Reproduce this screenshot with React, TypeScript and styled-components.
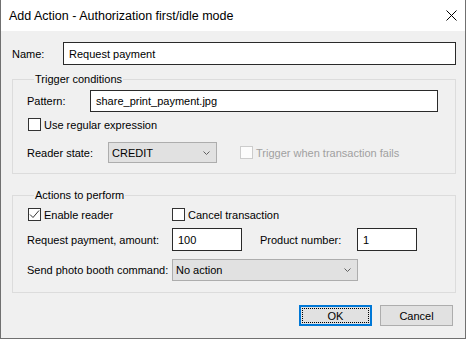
import React from "react";
import styled, { createGlobalStyle } from "styled-components";

const Global = createGlobalStyle`
  html, body { margin: 0; padding: 0; background: #ffffff; }
  body { font-family: "Liberation Sans", Arial, sans-serif; font-size: 11px; color: #000; }
  * { box-sizing: border-box; }
`;

const Window = styled.div`
  width: 466px;
  height: 339px;
  border: 1px solid #707070;
  border-top: none;
  background: #f0f0f0;
  display: flex;
  flex-direction: column;
`;

const TitleBar = styled.div`
  height: 31px;
  background: #ffffff;
  display: flex;
  align-items: center;
  justify-content: space-between;
  padding: 0 0 0 8px;
  font-size: 12.5px;
  flex-shrink: 0;
`;

const CloseBtn = styled.div`
  width: 28px;
  height: 30px;
  display: flex;
  align-items: center;
  justify-content: center;
`;

const Content = styled.div`
  padding: 11px 9px 0 11px;
  display: flex;
  flex-direction: column;
`;

const Row = styled.div<{ $mt?: number; $h?: number }>`
  display: flex;
  align-items: center;
  margin-top: ${(p) => p.$mt ?? 0}px;
  height: ${(p) => p.$h ?? 23}px;
`;

const Label = styled.span<{ $w: number; $ml?: number }>`
  width: ${(p) => p.$w}px;
  margin-left: ${(p) => p.$ml ?? 0}px;
  flex-shrink: 0;
  white-space: nowrap;
`;

const TextBox = styled.div<{ $w?: number; $h?: number }>`
  ${(p) => (p.$w ? `width: ${p.$w}px;` : "flex: 1;")}
  height: ${(p) => p.$h ?? 23}px;
  border: 1px solid #2a2a2a;
  background: #ffffff;
  display: flex;
  align-items: center;
  padding-left: 5px;
  white-space: nowrap;
`;

const Combo = styled.div<{ $w: number; $h?: number }>`
  width: ${(p) => p.$w}px;
  height: ${(p) => p.$h ?? 21}px;
  border: 1px solid #adadad;
  background: #e1e1e1;
  display: flex;
  align-items: center;
  justify-content: space-between;
  padding: 0 6px 0 3px;
`;

const Group = styled.fieldset<{ $mt: number; $pt: number; $pb: number }>`
  margin: ${(p) => p.$mt}px 0 0 0;
  border: 1px solid #dcdcdc;
  padding: ${(p) => p.$pt}px 17px ${(p) => p.$pb}px 14px;
  min-width: 0;
  display: flex;
  flex-direction: column;
`;

const Legend = styled.legend`
  margin-left: 7px;
  padding: 0 1px;
  line-height: 15px;
`;

const CheckItem = styled.label<{ $w?: number; $ml?: number; $disabled?: boolean }>`
  display: flex;
  align-items: center;
  gap: 3px;
  margin-left: ${(p) => p.$ml ?? 0}px;
  ${(p) => (p.$w ? `width: ${p.$w}px;` : "")}
  color: ${(p) => (p.$disabled ? "#a0a0a0" : "#000")};
  white-space: nowrap;
  flex-shrink: 0;
`;

const Box = styled.span<{ $disabled?: boolean }>`
  width: 13px;
  height: 13px;
  border: 1px solid ${(p) => (p.$disabled ? "#cccccc" : "#333333")};
  background: ${(p) => (p.$disabled ? "#fcfcfc" : "#ffffff")};
  display: flex;
  align-items: center;
  justify-content: center;
  flex-shrink: 0;
`;

const ButtonRow = styled.div`
  display: flex;
  justify-content: flex-end;
  gap: 8px;
  margin-top: 12px;
  padding-right: 3px;
`;

const Button = styled.div<{ $default?: boolean }>`
  width: 73px;
  height: 21px;
  background: #e1e1e1;
  border: ${(p) => (p.$default ? "2px solid #0078d7" : "1px solid #adadad")};
  display: flex;
  align-items: center;
  justify-content: center;
  position: relative;
`;

const FocusRect = styled.span`
  position: absolute;
  inset: 1px;
  border: 1px dotted #000;
`;

const Chevron = () => (
  <svg width="7" height="4" viewBox="0 0 7 4">
    <path d="M0.5 0.5 L3.5 3.5 L6.5 0.5" fill="none" stroke="#606060" strokeWidth="1" />
  </svg>
);

const Check = ({ on, disabled }: { on?: boolean; disabled?: boolean }) => (
  <Box $disabled={disabled}>
    {on && (
      <svg width="11" height="11" viewBox="0 0 11 11">
        <path d="M1 5.5 L4 8.5 L10 1.5" fill="none" stroke="#333" strokeWidth="1" />
      </svg>
    )}
  </Box>
);

export default function App() {
  return (
    <>
      <Global />
      <Window>
        <TitleBar>
          <span>Add Action - Authorization first/idle mode</span>
          <CloseBtn>
            <svg width="11" height="11" viewBox="0 0 11 11">
              <path d="M0.5 0.5 L10.5 10.5 M10.5 0.5 L0.5 10.5" stroke="#000" strokeWidth="1" />
            </svg>
          </CloseBtn>
        </TitleBar>
        <Content>
          <Row>
            <Label $w={51}>Name:</Label>
            <TextBox>Request payment</TextBox>
          </Row>

          <Group $mt={7} $pt={3} $pb={10}>
            <Legend>Trigger conditions</Legend>
            <Row $h={22}>
              <Label $w={63}>Pattern:</Label>
              <TextBox $h={22}>share_print_payment.jpg</TextBox>
            </Row>
            <Row $mt={5} $h={15}>
              <CheckItem $ml={1}>
                <Check />
                Use regular expression
              </CheckItem>
            </Row>
            <Row $mt={10} $h={21}>
              <Label $w={81}>Reader state:</Label>
              <Combo $w={109}>
                <span>CREDIT</span>
                <Chevron />
              </Combo>
              <CheckItem $ml={23} $disabled>
                <Check disabled />
                Trigger when transaction fails
              </CheckItem>
            </Row>
          </Group>

          <Group $mt={14} $pt={4} $pb={11}>
            <Legend>Actions to perform</Legend>
            <Row $h={15}>
              <CheckItem $ml={1} $w={144}>
                <Check on />
                Enable reader
              </CheckItem>
              <CheckItem>
                <Check />
                Cancel transaction
              </CheckItem>
            </Row>
            <Row $mt={6} $h={23}>
              <Label $w={145}>Request payment, amount:</Label>
              <TextBox $w={70}>100</TextBox>
              <Label $w={97} $ml={18}>Product number:</Label>
              <TextBox $w={60}>1</TextBox>
            </Row>
            <Row $mt={8} $h={22}>
              <Label $w={145}>Send photo booth command:</Label>
              <Combo $w={186} $h={22}>
                <span>No action</span>
                <Chevron />
              </Combo>
            </Row>
          </Group>

          <ButtonRow>
            <Button $default>
              <FocusRect />
              OK
            </Button>
            <Button>Cancel</Button>
          </ButtonRow>
        </Content>
      </Window>
    </>
  );
}
